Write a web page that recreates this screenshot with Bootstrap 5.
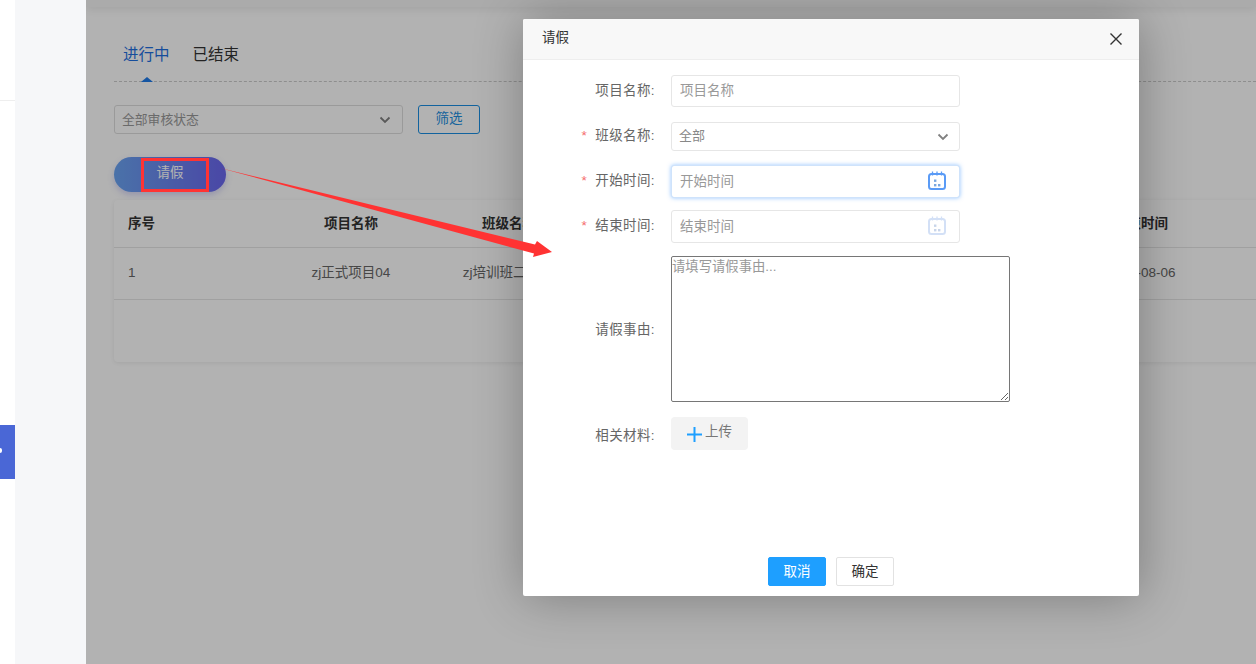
<!DOCTYPE html>
<html lang="zh">
<head>
<meta charset="utf-8">
<title>请假</title>
<link rel="stylesheet" href="https://cdn.jsdelivr.net/npm/bootstrap@5.3.0/dist/css/bootstrap.min.css">
<style>
html,body{height:100%;margin:0;overflow:hidden}
body{font-family:"Liberation Sans","Noto Sans CJK SC",sans-serif;font-size:13.5px;color:#333;background:#fff}
.page-shell{position:relative;width:1256px;height:664px;overflow:hidden;display:flex}
.edge-strip{width:15px;flex:none;background:#fff;position:relative}
.edge-line{position:absolute;left:0;right:0;top:100px;height:1px;background:#eee}
.edge-tab{position:absolute;left:0;top:425px;width:15px;height:54px;background:#4a67d6}
.edge-dot{position:absolute;left:0;top:23px;width:2px;height:5px;background:#fff;border-radius:0 2px 2px 0}
.side-rail{width:71px;flex:none;background:#f6f7f9}
.main-pane{flex:1;position:relative;overflow:hidden;background:#fff}
.top-bar{height:7px;background:#f5f5f5;box-shadow:0 2px 8px rgba(0,0,0,.1)}
.content-wrap{width:1200px;padding:30px 0 0 28px}
.tab-row{height:45px;border-bottom:1px dashed #ccc;position:relative;display:flex;gap:23px;padding-left:9px;font-size:15.5px;line-height:36px}
.tab-on{color:#1f6fe0}
.tab-off{color:#333}
.tab-mark{position:absolute;left:27px;bottom:-1px;width:0;height:0;border-left:6px solid transparent;border-right:6px solid transparent;border-bottom:5px solid #1f7ae8}
.filter-row{display:flex;gap:15px;margin-top:23px}
.form-select.status-pick,.form-select.class-pick{background-image:url("data:image/svg+xml,%3csvg xmlns='http://www.w3.org/2000/svg' viewBox='0 0 12 10'%3e%3cpath fill='none' stroke='%23808080' stroke-width='1.8' d='M1.5 2.500L6 7l4.500-4.500'/%3e%3c/svg%3e")}
.form-select.status-pick{width:289px;height:29px;padding:0 7px;font-size:12.8px;color:#999;border-color:#ddd;border-radius:3px;background-position:right 11px center;background-size:12px 10px}
.btn.filter-btn{width:62px;height:29px;padding:0 0 2px;font-size:13.5px;line-height:24px;color:#1c8fe0;border:1px solid #1a8fe3;border-radius:3px;background:#fff}
.btn.leave-btn{display:block;margin-top:23px;width:112px;height:35px;padding:0 0 2px;font-size:13.5px;color:#fff;border:0;border-radius:18px;background:linear-gradient(90deg,#6aa4f2,#6b66ee);box-shadow:0 3px 6px rgba(90,90,220,.25)}
.card.data-card{margin-top:8px;height:162px;border:0;border-radius:4px;box-shadow:0 1px 4px rgba(0,0,0,.08);overflow:hidden}
.table.data-table{table-layout:fixed;width:1264px;margin:0;font-size:13.5px;color:#666}
.data-table th{height:47px;vertical-align:middle;text-align:center;font-weight:700;color:#333;padding:2px 0 0;font-size:13.5px;border-bottom:1px solid #e5e5e5}
.data-table td{height:52px;vertical-align:middle;text-align:center;padding:0;border-bottom:1px solid #e5e5e5}
.data-table th:first-child,.data-table td:first-child{text-align:left;padding-left:14px}
.dim-layer{position:absolute;inset:0;background:rgba(0,0,0,.3)}
.modal-content.leave-modal{position:absolute;left:437px;top:19px;width:616px;height:577px;border:0;border-radius:2px;box-shadow:1px 1px 50px rgba(0,0,0,.3);background:#fff}
.leave-modal .modal-header{height:41px;padding:0 16px 1px 19px;background:#f8f8f8;border-bottom:1px solid #eee;border-radius:2px 2px 0 0;font-size:13.5px;color:#333}
.close-x{width:14px;height:14px;display:block;margin-top:1px}
.leave-modal .modal-body{padding:15px 0 0;flex:none}
.field-row{display:flex;align-items:center}
.field-name{width:148px;flex:none;text-align:right;color:#666;font-size:13.5px;letter-spacing:.4px;padding-right:16px;white-space:nowrap}
.field-mid{margin-top:2px}
.field-low{margin-top:5px}
.req-star{color:#f56c6c;margin-right:8px}
.form-control.text-in{width:289px;height:32px;padding:0 8px 1px;font-size:13.5px;border:1px solid #e6e6e6;border-radius:3px}
.form-control.text-in::placeholder,.raw-area::placeholder{color:#999;opacity:1}
.form-select.class-pick{width:289px;height:29px;padding:0 7px 1px;font-size:13px;color:#888;border-color:#e6e6e6;border-radius:3px;background-position:right 10px center;background-size:12px 10px}
.date-box{position:relative;width:289px}
.date-box .form-control.text-in{height:33px}
.date-box.is-on .form-control.text-in{border-color:#cfe3fb;box-shadow:0 0 4px rgba(64,150,255,.55)}
.cal-ico{position:absolute;right:14px;top:6px;width:18px;height:19px}
.raw-area{width:339px;height:146px;padding:0;font-size:13.33px;border:1px solid #767676;border-radius:2px;display:block;font-family:inherit;color:#333}
.upload-box{width:77px;height:33px;background:#f3f3f3;border-radius:4px;display:flex;align-items:center;justify-content:center;gap:3px;color:#777;font-size:13.5px;padding-bottom:3px}
.plus-ico{width:15px;height:15px;margin-top:5px}
.gap-a{margin-top:15px}.gap-b{margin-top:14px}.gap-c{margin-top:12px}.gap-d{margin-top:13px}
.foot-row{position:absolute;left:0;right:0;top:538px;display:flex;justify-content:center;gap:10px}
.btn.foot-cancel,.btn.foot-ok{width:58px;height:29px;padding:0;font-size:13.5px;border-radius:2px;line-height:26px}
.btn.foot-cancel{background:#1e9fff;border:1px solid #1e9fff;color:#fff}
.btn.foot-ok{background:#fff;border:1px solid #e2e2e2;color:#333}
.mark-layer{position:absolute;left:0;top:0;width:1256px;height:664px;pointer-events:none}
</style>
</head>
<body>
<div class="page-shell">
  <div class="edge-strip">
    <div class="edge-line"></div>
    <div class="edge-tab"><div class="edge-dot"></div></div>
  </div>
  <div class="side-rail"></div>
  <div class="main-pane">
    <div class="top-bar"></div>
    <div class="content-wrap">
      <div class="tab-row">
        <span class="tab-on">进行中</span><span class="tab-off">已结束</span>
        <span class="tab-mark"></span>
      </div>
      <div class="filter-row">
        <select class="form-select status-pick"><option>全部审核状态</option></select>
        <button class="btn filter-btn" type="button">筛选</button>
      </div>
      <button class="btn leave-btn" type="button">请假</button>
      <div class="card data-card">
        <table class="table data-table">
          <thead><tr><th>序号</th><th>项目名称</th><th>班级名称</th><th></th><th></th><th></th><th>结束时间</th><th></th></tr></thead>
          <tbody><tr><td>1</td><td>zj正式项目04</td><td>zj培训班二期04</td><td></td><td></td><td></td><td>2020-08-06</td><td></td></tr></tbody>
        </table>
      </div>
    </div>
    <div class="dim-layer"></div>
    <div class="modal-content leave-modal">
      <div class="modal-header">
        <span>请假</span>
        <svg class="close-x ms-auto" viewBox="0 0 14 14"><path d="M1.500 1.500l11 11M12.500 1.500l-11 11" stroke="#333" stroke-width="1.4" fill="none"/></svg>
      </div>
      <div class="modal-body">
        <div class="field-row">
          <label class="field-name">项目名称:</label>
          <input class="form-control text-in" placeholder="项目名称">
        </div>
        <div class="field-row gap-a">
          <label class="field-name"><span class="req-star">*</span>班级名称:</label>
          <select class="form-select class-pick"><option>全部</option></select>
        </div>
        <div class="field-row gap-b">
          <label class="field-name"><span class="req-star">*</span>开始时间:</label>
          <div class="date-box is-on">
            <input class="form-control text-in" placeholder="开始时间">
            <svg class="cal-ico" viewBox="0 0 18 19"><rect x="1" y="3" width="16" height="15" rx="2.500" fill="#fff" stroke="#5a9bf6" stroke-width="2"/><path d="M4.500 .5v4M9 .5v4M13.500 .5v4" stroke="#5a9bf6" stroke-width="1.300"/><rect x="6" y="8.500" width="2.400" height="2.400" fill="#7aa8e0"/><rect x="6" y="13" width="2.400" height="2.400" fill="#7aa8e0"/><rect x="10" y="13" width="2.400" height="2.400" fill="#7aa8e0"/></svg>
          </div>
        </div>
        <div class="field-row gap-c">
          <label class="field-name"><span class="req-star">*</span>结束时间:</label>
          <div class="date-box">
            <input class="form-control text-in" placeholder="结束时间">
            <svg class="cal-ico" viewBox="0 0 18 19"><rect x="1" y="3" width="16" height="15" rx="2.500" fill="#fff" stroke="#d3e0f6" stroke-width="2"/><path d="M4.500 .5v4M9 .5v4M13.500 .5v4" stroke="#d3e0f6" stroke-width="1.300"/><rect x="6" y="8.500" width="2.400" height="2.400" fill="#c8d5ea"/><rect x="6" y="13" width="2.400" height="2.400" fill="#c8d5ea"/><rect x="10" y="13" width="2.400" height="2.400" fill="#c8d5ea"/></svg>
          </div>
        </div>
        <div class="field-row gap-d">
          <label class="field-name field-mid">请假事由:</label>
          <textarea class="raw-area" placeholder="请填写请假事由..."></textarea>
        </div>
        <div class="field-row gap-a">
          <label class="field-name field-low">相关材料:</label>
          <div class="upload-box">
            <svg class="plus-ico" viewBox="0 0 15 15"><path d="M7.500 0v15M0 7.500h15" stroke="#1e9fff" stroke-width="2"/></svg>
            <span>上传</span>
          </div>
        </div>
      </div>
      <div class="foot-row">
        <button class="btn foot-cancel" type="button">取消</button>
        <button class="btn foot-ok" type="button">确定</button>
      </div>
    </div>
  </div>
  <svg class="mark-layer" viewBox="0 0 1256 664">
    <rect x="142.500" y="159.500" width="65" height="31" fill="none" stroke="#f33" stroke-width="3"/>
    <path d="M220 168L535 244.500L537 241L552 252L533 257L534 253.500Z" fill="#f33"/>
  </svg>
</div>
</body>
</html>
